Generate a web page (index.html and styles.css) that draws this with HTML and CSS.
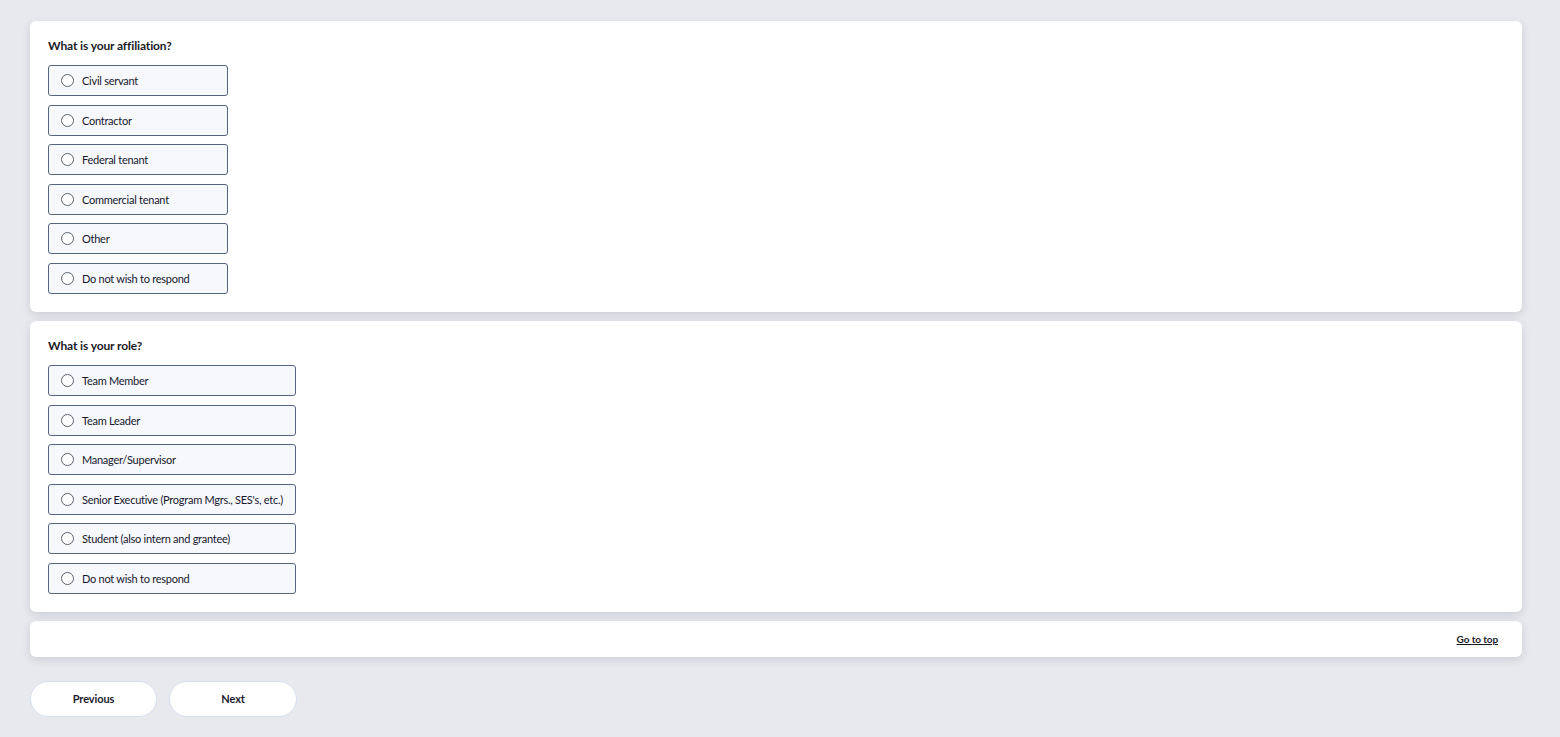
FILE: index.html
```html
<!DOCTYPE html>
<html>
<head>
<meta charset="utf-8">
<link rel="stylesheet" href="styles.css">
</head>
<body>
<main class="page">
  <section class="card">
    <h2 class="question">What is your affiliation?</h2>
    <div class="options narrow">
      <label class="option"><span class="radio"></span>Civil servant</label>
      <label class="option"><span class="radio"></span>Contractor</label>
      <label class="option"><span class="radio"></span>Federal tenant</label>
      <label class="option"><span class="radio"></span>Commercial tenant</label>
      <label class="option"><span class="radio"></span>Other</label>
      <label class="option"><span class="radio"></span>Do not wish to respond</label>
    </div>
  </section>
  <section class="card">
    <h2 class="question">What is your role?</h2>
    <div class="options wide">
      <label class="option"><span class="radio"></span>Team Member</label>
      <label class="option"><span class="radio"></span>Team Leader</label>
      <label class="option"><span class="radio"></span>Manager/Supervisor</label>
      <label class="option"><span class="radio"></span>Senior Executive (Program Mgrs., SES's, etc.)</label>
      <label class="option"><span class="radio"></span>Student (also intern and grantee)</label>
      <label class="option"><span class="radio"></span>Do not wish to respond</label>
    </div>
  </section>
  <section class="card footer-card">
    <a class="top-link" href="#">Go to top</a>
  </section>
  <nav class="nav">
    <button class="btn">Previous</button>
    <button class="btn">Next</button>
  </nav>
</main>
</body>
</html>
```
FILE: styles.css
```css
html, body {
  margin: 0;
  padding: 0;
  background: #e8e9ee;
  font-family: Lato, "Open Sans", sans-serif;
  color: #1b1b2f;
}
.page {
  padding: 21px 38px 0 30px;
  display: flex;
  flex-direction: column;
}
.card {
  background: #fff;
  border-radius: 6px;
  box-shadow: 0 3px 8px rgba(40, 50, 80, 0.14);
  padding: 17px 18px 18px 18px;
  margin-bottom: 9px;
}
.question {
  margin: 0 0 11px 0;
  font-size: 12px;
  font-weight: 700;
  line-height: 16px;
  letter-spacing: -0.12px;
  color: #1b1b1f;
}
.options {
  display: flex;
  flex-direction: column;
  gap: 8.6px;
}
.options.narrow .option { width: 180px; }
.options.wide .option { width: 248px; }
.option {
  box-sizing: border-box;
  height: 31px;
  display: flex;
  align-items: center;
  background: #f6f8fc;
  border: 1px solid #56657f;
  border-radius: 3px;
  font-size: 11px;
  letter-spacing: -0.26px;
  color: #17172e;
  padding-left: 12px;
}
.radio {
  box-sizing: border-box;
  width: 13px;
  height: 13px;
  border: 1px solid #5b6170;
  border-radius: 50%;
  background: #fff;
  margin-right: 8px;
  flex: none;
}
.footer-card {
  height: 36px;
  padding: 0 24px;
  box-sizing: border-box;
  display: flex;
  justify-content: flex-end;
  align-items: center;
  margin-bottom: 0;
}
.top-link {
  font-size: 10px;
  font-weight: 700;
  letter-spacing: -0.1px;
  color: #1b1b1f;
  text-decoration: underline;
}
.nav {
  display: flex;
  gap: 12px;
  margin-top: 24px;
}
.btn {
  width: 127px;
  height: 36px;
  border-radius: 18px;
  background: #fff;
  border: 1px solid #d5dff0;
  font-family: Lato, "Open Sans", sans-serif;
  font-size: 11px;
  font-weight: 700;
  letter-spacing: -0.1px;
  color: #1b1b2f;
  cursor: pointer;
}
.btn + .btn { width: 128px; }
```
